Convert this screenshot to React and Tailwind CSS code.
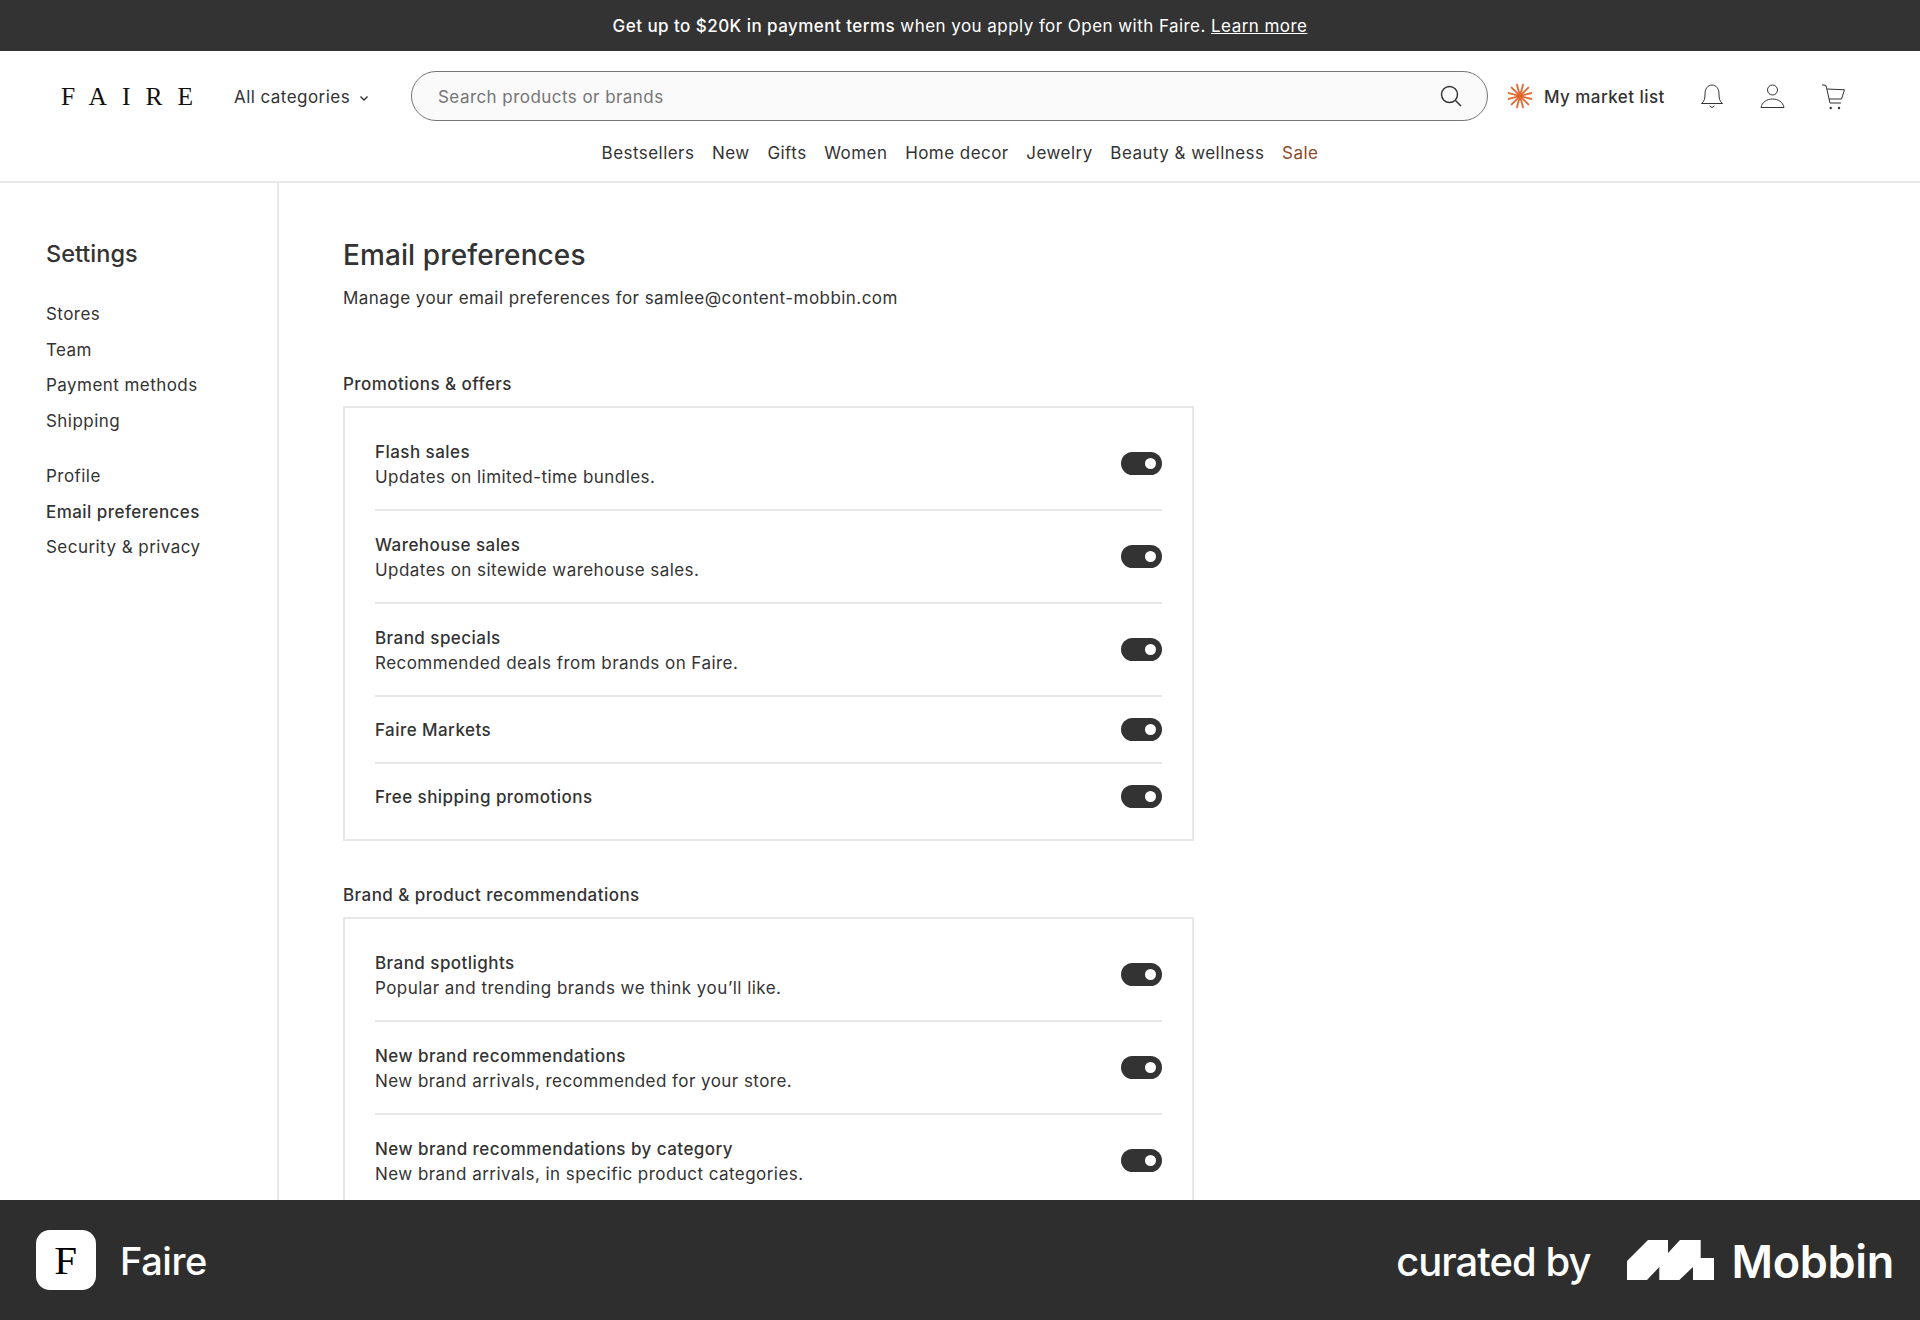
import { Fragment } from 'react'

const sections = [
  {
    title: 'Promotions & offers',
    rows: [
      { name: 'Flash sales', desc: 'Updates on limited-time bundles.' },
      { name: 'Warehouse sales', desc: 'Updates on sitewide warehouse sales.' },
      { name: 'Brand specials', desc: 'Recommended deals from brands on Faire.' },
      { name: 'Faire Markets' },
      { name: 'Free shipping promotions' },
    ],
  },
  {
    title: 'Brand & product recommendations',
    rows: [
      { name: 'Brand spotlights', desc: 'Popular and trending brands we think you’ll like.' },
      { name: 'New brand recommendations', desc: 'New brand arrivals, recommended for your store.' },
      { name: 'New brand recommendations by category', desc: 'New brand arrivals, in specific product categories.' },
    ],
  },
]

const navLinks = ['Bestsellers', 'New', 'Gifts', 'Women', 'Home decor', 'Jewelry', 'Beauty & wellness']

function Burst() {
  const rays = [0, 30, 60, 90, 120, 150]
  return (
    <svg width="26" height="26" viewBox="0 0 26 26" stroke="#e0672f" strokeWidth="1.8">
      {rays.map((a) => (
        <line key={a} x1="13" y1="0.5" x2="13" y2="25.5" transform={`rotate(${a + 15} 13 13)`} />
      ))}
    </svg>
  )
}

function Toggle() {
  return (
    <div className="w-[41px] h-[23px] rounded-full bg-[#333333] flex items-center justify-end pr-[6px] shrink-0">
      <div className="w-[11px] h-[11px] rounded-full bg-white" />
    </div>
  )
}

function Row({ name, desc }) {
  return (
    <div className="flex items-center justify-between py-[19.5px]">
      <div className={`leading-[26px] ${desc ? 'translate-y-[1px]' : ''}`}>
        <div className="font-medium">{name}</div>
        {desc && <div className="-translate-y-[1px]">{desc}</div>}
      </div>
      <Toggle />
    </div>
  )
}

export default function App() {
  return (
    <div className="h-[1320px] flex flex-col overflow-hidden bg-white text-[#333333] text-[17px] tracking-[0.45px] font-['Inter',sans-serif]">
      <div className="h-[51px] shrink-0 pt-[2px] bg-[#333333] text-white flex items-center justify-center">
        <span className="font-medium">Get up to $20K in payment terms</span>
        <span>&nbsp;when you apply for Open with Faire.&nbsp;</span>
        <span className="underline">Learn more</span>
      </div>

      <header className="h-[132px] shrink-0 border-b-2 border-[#e8e8e8]">
        <div className="flex items-center h-[50px] mt-[20px] pl-[61px]">
          <div className="w-[173px] pt-[2px] font-['Liberation_Serif',serif] text-[#111111] text-[25.5px] tracking-[15.100px] leading-none">FAIRE</div>
          <div className="w-[177px] flex items-center gap-2 pt-[3px]">
            All categories
            <svg width="12" height="12" viewBox="0 0 12 12" fill="none" stroke="#333333" strokeWidth="1.4"><path d="M2.5 4.5 6 8l3.5-3.5" /></svg>
          </div>
          <div className="w-[1077px] h-[50px] rounded-full border border-[#757575] bg-[#fafafa] flex items-center justify-between pl-[26px] pr-[25px] text-[#757575]">
            <span className="pt-[3px]">Search products or brands</span>
            <svg width="22" height="22" viewBox="0 0 22 22" fill="none" stroke="#333333" strokeWidth="1.5"><circle cx="9.5" cy="9.5" r="8" /><path d="m15.5 15.5 5.5 5.5" /></svg>
          </div>
          <div className="ml-[19px] flex items-center gap-[11px]">
            <Burst />
            <span className="font-medium pt-[3px]">My market list</span>
          </div>
          <div className="ml-[35px] flex items-center gap-[36px] pt-[1px]">
            <svg width="24" height="26" viewBox="0 0 24 26" fill="none" stroke="#333333" strokeWidth="1">
              <path d="M1.500 19.500C4.500 17.500 5 14 5 10 5 4.500 8 1 12 1s7 3.500 7 9c0 4 .5 7.500 3.500 9.500Z" />
              <path d="M9.500 22 12 23.500 14.500 22" />
            </svg>
            <svg width="25" height="26" viewBox="0 0 25 26" fill="none" stroke="#333333" strokeWidth="1">
              <circle cx="12.500" cy="6" r="5" />
              <path d="M1 23.500C2 18 7 15 12.500 15S23 18 24 23.500Z" />
            </svg>
            <svg width="25" height="26" viewBox="0 0 25 26" fill="none" stroke="#333333" strokeWidth="1">
              <path d="M1 .8 5 1.500 9 19H20" />
              <path d="M5.800 5 23.500 5.800 20.500 15H8" />
              <circle cx="9.700" cy="24" r="1.200" fill="#333333" stroke="none" />
              <circle cx="18" cy="24" r="1.200" fill="#333333" stroke="none" />
            </svg>
          </div>
        </div>
        <nav className="flex justify-center gap-[17.700px] mt-[19px] leading-[26px]">
          {navLinks.map((l) => <span key={l}>{l}</span>)}
          <span className="text-[#8a4b2a]">Sale</span>
        </nav>
      </header>

      <main className="flex-1 flex min-h-0 overflow-hidden">
        <aside className="w-[279px] shrink-0 border-r-2 border-[#e8e8e8] pl-[46px] pt-[55px]">
          <div className="text-[23.5px] tracking-normal leading-[32px] font-medium mb-[27px]">Settings</div>
          <div className="flex flex-col">
            {['Stores', 'Team', 'Payment methods', 'Shipping'].map((s) => (
              <div key={s} className="h-[35.5px] leading-[35.5px]">{s}</div>
            ))}
          </div>
          <div className="flex flex-col mt-[20px]">
            {['Profile', 'Email preferences', 'Security & privacy'].map((s) => (
              <div key={s} className={`h-[35.5px] leading-[35.5px] ${s === 'Email preferences' ? 'font-medium' : ''}`}>{s}</div>
            ))}
          </div>
        </aside>
        <section className="flex-1 pl-[64px] pt-[54px]">
          <h1 className="text-[28px] tracking-[0.1px] leading-[36px] font-medium">Email preferences</h1>
          <p className="leading-[26px] mt-[12px]">Manage your email preferences for samlee@content-mobbin.com</p>
          {sections.map((sec, i) => (
            <Fragment key={sec.title}>
              <div className={`leading-[26px] font-medium ${i === 0 ? 'mt-[60px]' : 'mt-[41px]'}`}>{sec.title}</div>
              <div className="w-[851px] mt-[9px] border-2 border-[#e8e8e8] px-[30px] pt-[10px] pb-[10px] divide-y-2 divide-[#e8e8e8]">
                {sec.rows.map((r) => <Row key={r.name} {...r} />)}
              </div>
            </Fragment>
          ))}
        </section>
      </main>

      <footer className="h-[120px] shrink-0 bg-[#2e2e2e] text-white flex items-center justify-between pl-[36px] pr-[26px]">
        <div className="flex items-center gap-[24px]">
          <div className="w-[60px] h-[60px] rounded-[14px] bg-white flex items-center justify-center font-['Liberation_Serif',serif] text-black text-[41px] leading-none">F</div>
          <span className="text-[38px] font-medium tracking-[-0.4px] pt-[3px]">Faire</span>
        </div>
        <div className="flex items-center">
          <span className="text-[40px] font-medium tracking-[-1px] mr-[37px] pt-[3px]">curated by</span>
          <svg width="87" height="40" viewBox="0 0 87 40" fill="white">
            <path d="M0 21 21 0H41V13L53 0H73.700V18H87V40H66V27L52.300 40H32.300V27L20 40H0Z" />
          </svg>
          <span className="text-[45px] font-semibold tracking-[-0.3px] ml-[17px] pt-[3px]">Mobbin</span>
        </div>
      </footer>
    </div>
  )
}
